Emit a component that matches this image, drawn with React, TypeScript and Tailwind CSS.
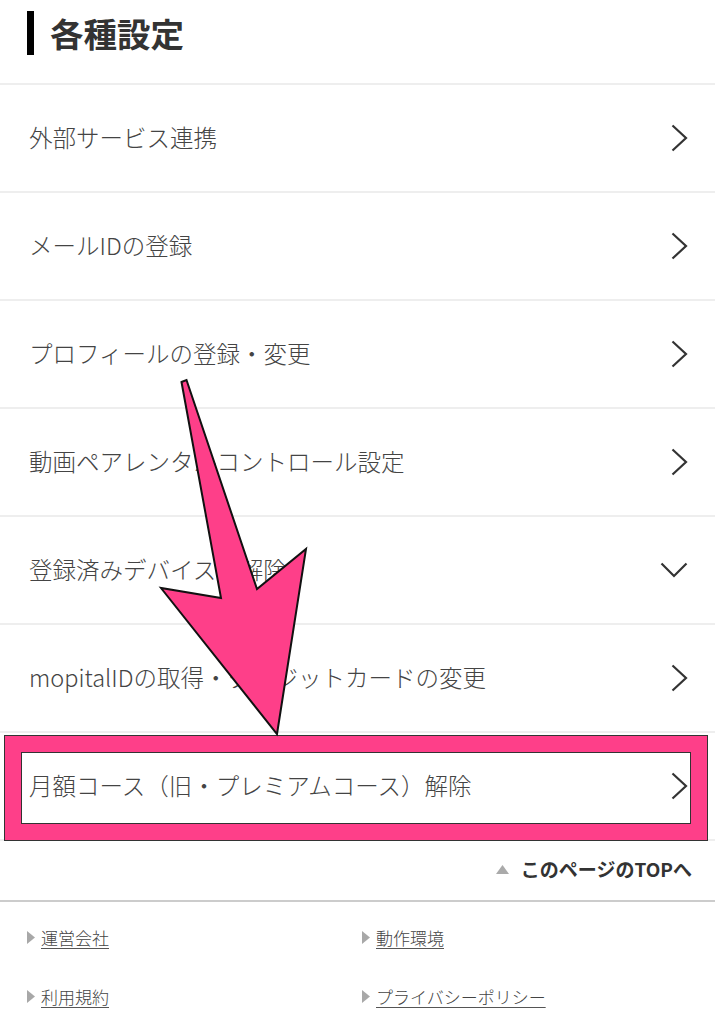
import React from "react";

const font = { fontFamily: '"Noto Sans CJK JP", "Noto Sans", sans-serif' };

function ChevronRight() {
  return (
    <svg width="17" height="28" viewBox="0 0 17 28" className="shrink-0">
      <polyline points="1.5,1.5 15,14 1.5,26.5" fill="none" stroke="#333" strokeWidth="2.2" />
    </svg>
  );
}

function ChevronDown() {
  return (
    <svg width="28" height="16" viewBox="0 0 28 16" className="shrink-0">
      <polyline points="1.5,1.5 14,14 26.5,1.5" fill="none" stroke="#333" strokeWidth="2.2" />
    </svg>
  );
}

const rows: { label: string; down?: boolean; highlight?: boolean }[] = [
  { label: "外部サービス連携" },
  { label: "メールIDの登録" },
  { label: "プロフィールの登録・変更" },
  { label: "動画ペアレンタルコントロール設定" },
  { label: "登録済みデバイスの解除", down: true },
  { label: "mopitalIDの取得・クレジットカードの変更" },
  { label: "月額コース（旧・プレミアムコース）解除", highlight: true },
];

function FooterLink({ text }: { text: string }) {
  return (
    <div className="flex items-center gap-[6px]">
      <svg width="8" height="13" viewBox="0 0 8 13" className="shrink-0">
        <polygon points="0,0 8,6.5 0,13" fill="#a8a8a8" />
      </svg>
      <span className="text-[17px] font-light text-[#444] underline underline-offset-[3px] decoration-[#555]">{text}</span>
    </div>
  );
}

export default function App() {
  return (
    <div className="relative w-[715px] min-h-[1024px] bg-white overflow-hidden" style={font}>
      {/* Header */}
      <div className="h-[85px] border-b-2 border-[#eeeeee] flex items-start pt-[11px] pl-[27px]">
        <div className="w-[7px] h-[44px] bg-black" />
        <h1 className="ml-[16px] text-[33.5px] leading-[44px] font-bold text-[#333]">各種設定</h1>
      </div>

      {/* Rows */}
      {rows.map((r) => (
        <div
          key={r.label}
          className="relative h-[108px] border-b-2 border-[#eeeeee] flex items-center justify-between pl-[29px] pr-[27px]"
        >
          <span className="text-[23.5px] font-light text-[#444]">{r.label}</span>
          {r.down ? <ChevronDown /> : <ChevronRight />}
          {r.highlight && (
            <div className="absolute left-[4px] right-[7px] top-[2px] bottom-[-2px] border border-[#333] pointer-events-none">
              <div className="w-full h-full border-[16px] border-[#fe3f89] shadow-[inset_0_0_0_1px_#333]" />
            </div>
          )}
        </div>
      ))}

      {/* Page top */}
      <div className="h-[61px] border-b-2 border-[#cccccc] flex items-center justify-end pr-[23px] pb-[2px]">
        <svg width="13" height="9" viewBox="0 0 13 9" className="mr-[12px]">
          <polygon points="6.5,0 13,9 0,9" fill="#aaaaaa" />
        </svg>
        <span className="text-[19px] font-bold text-[#333]">このページのTOPへ</span>
      </div>

      {/* Footer */}
      <div className="grid grid-cols-[335px_1fr] pl-[27px] pt-[23px] gap-y-[33px]">
        <FooterLink text="運営会社" />
        <FooterLink text="動作環境" />
        <FooterLink text="利用規約" />
        <FooterLink text="プライバシーポリシー" />
      </div>

      {/* Arrow annotation overlay */}
      <svg className="absolute left-0 top-0 pointer-events-none" width="715" height="1024" viewBox="0 0 715 1024">
        <polygon
          points="181.5,382 186.5,380 257,589 306,549 277,734 161,588 221,598"
          fill="#fe3f89"
          stroke="#111"
          strokeWidth="2"
          strokeLinejoin="miter"
        />
      </svg>
    </div>
  );
}
